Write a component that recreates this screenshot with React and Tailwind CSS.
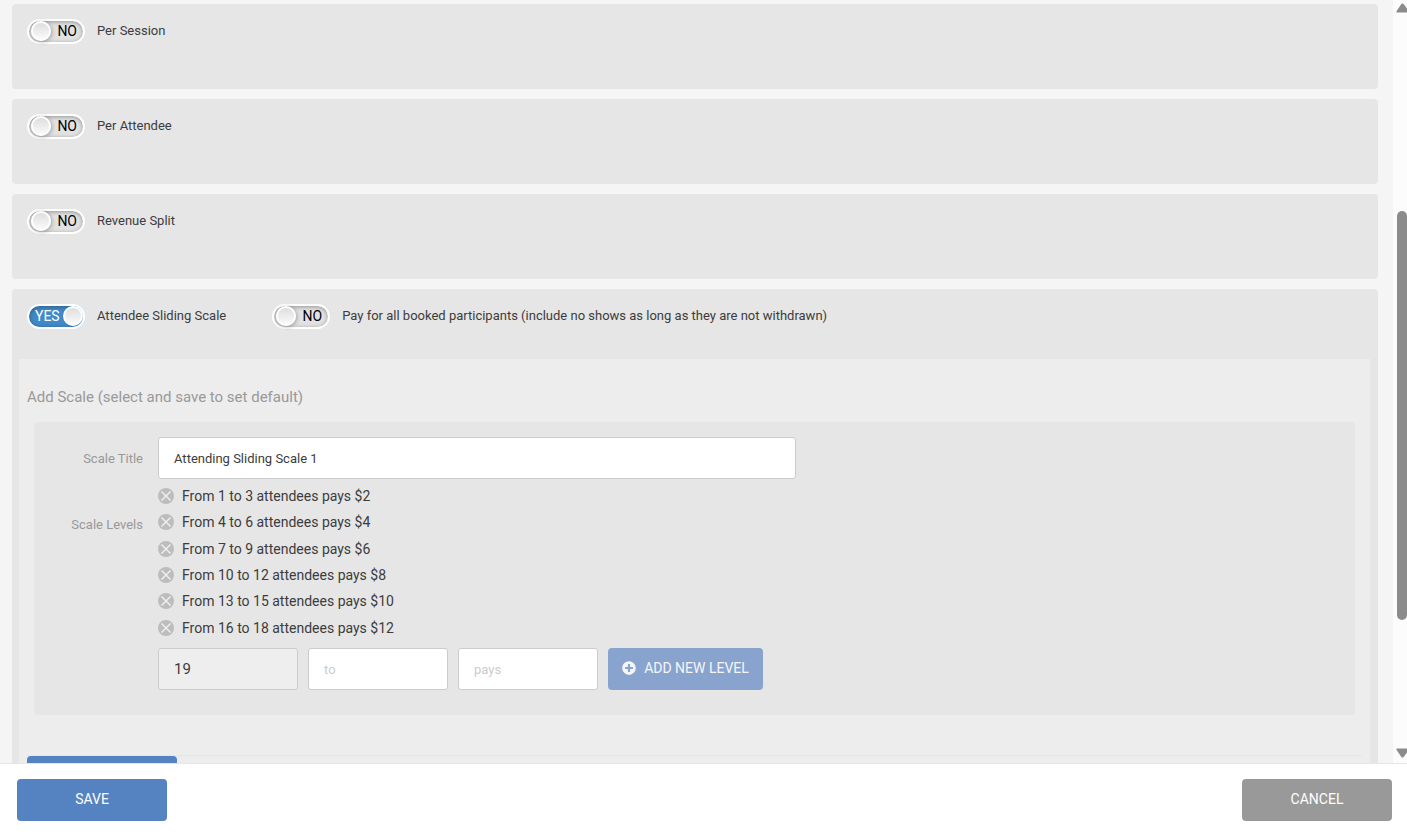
import { useState } from 'react'
import { FaPlusCircle } from 'react-icons/fa'

const payOptions = ['Per Session', 'Per Attendee', 'Revenue Split']

const initialLevels = [
  { from: 1, to: 3, pays: 2 },
  { from: 4, to: 6, pays: 4 },
  { from: 7, to: 9, pays: 6 },
  { from: 10, to: 12, pays: 8 },
  { from: 13, to: 15, pays: 10 },
  { from: 16, to: 18, pays: 12 }
]

function Toggle({ label, defaultOn = false }) {
  const [on, setOn] = useState(defaultOn)

  return (
    <label className="flex items-start gap-3 cursor-pointer">
      <span
        className={`relative flex shrink-0 items-start w-[58px] h-[25px] rounded-full border-2 border-white shadow-[inset_0_1px_4px_rgba(0,0,0,0.35)] ${
          on ? 'bg-[#4189c7]' : 'bg-[#e2e2e2]'
        }`}
      >
        <input
          type="checkbox"
          checked={on}
          onChange={(e) => setOn(e.target.checked)}
          className="absolute inset-0 opacity-0 cursor-pointer"
        />
        <span className={`w-full px-[6px] text-sm leading-5 ${on ? 'text-left text-white' : 'text-right text-black'}`}>
          {on ? 'YES' : 'NO'}
        </span>
        <span
          className={`absolute top-0 w-5 h-5 rounded-full border-2 border-white bg-linear-to-b from-[#dedede] to-[#fafafa] ${
            on ? 'right-0' : 'left-[2px] shadow-[1px_1px_4px_rgba(0,0,0,0.3)]'
          }`}
        />
      </span>
      <span className="text-[13px] leading-[23px]">{label}</span>
    </label>
  )
}

function RemoveIcon() {
  return (
    <svg viewBox="0 0 16 16" className="w-4 h-4">
      <circle cx="8" cy="8" r="8" fill="#bdbdbd" />
      <path d="M3.5 3.5l9 9M12.5 3.5l-9 9" stroke="#f2f2f2" strokeWidth="1.3" />
    </svg>
  )
}

function Scrollbar() {
  return (
    <div aria-hidden="true" className="flex flex-col items-end shrink-0 w-[14px] bg-[#fcfcfc] pt-[3px] pb-[5px]">
      <svg viewBox="0 0 11 10" className="w-[11px] h-[10px]">
        <path d="M6.5 0.5Q7.3 0.5 8 1.6L11 5.5V9.5H0.8Q0 9.5 0.5 8.3L5 1.6Q5.7 0.5 6.5 0.5Z" fill="#8b8b8b" />
      </svg>
      <div className="flex-[198]" />
      <div className="flex-[409] w-[10px] rounded-full bg-[#8b8b8b]" />
      <div className="flex-[128]" />
      <svg viewBox="0 0 11 10" className="w-[11px] h-[10px]">
        <path d="M6.5 9.5Q7.3 9.5 8 8.4L11 4.5V0.5H0.8Q0 0.5 0.5 1.7L5 8.4Q5.7 9.5 6.5 9.5Z" fill="#8b8b8b" />
      </svg>
    </div>
  )
}

export default function App() {
  const [title, setTitle] = useState('Attending Sliding Scale 1')
  const [levels, setLevels] = useState(initialLevels)
  const [to, setTo] = useState('')
  const [pays, setPays] = useState('')

  const nextFrom = levels.length ? levels[levels.length - 1].to + 1 : 1

  const addLevel = () => {
    if (!Number(to) || !Number(pays)) return
    setLevels([...levels, { from: nextFrom, to: Number(to), pays: Number(pays) }])
    setTo('')
    setPays('')
  }

  const removeLevel = (from) => {
    setLevels(levels.filter((level) => level.from !== from))
  }

  return (
    <div className="flex flex-col h-screen bg-[#f5f5f5] font-['Roboto',sans-serif] text-[#3c3c3c]">
      <div className="flex flex-1 min-h-0">
        <main className="flex-1 min-w-0 overflow-hidden pt-1 pl-3 pr-[15px]">
          <div className="space-y-[10px]">
            {payOptions.map((option) => (
              <section key={option} className="h-[85px] p-[15px] rounded bg-[#e6e6e6]">
                <div className="flex">
                  <Toggle label={option} />
                </div>
              </section>
            ))}

            {/* Sliding scale */}
            <section className="rounded bg-[#e6e6e6] pl-[7px] pr-2 pb-2">
              <div className="flex gap-[46px] h-[70px] pt-[15px] pl-2">
                <Toggle label="Attendee Sliding Scale" defaultOn />
                <Toggle label="Pay for all booked participants (include no shows as long as they are not withdrawn)" />
              </div>

              <div className="bg-[#ededed] pt-7 pb-8">
                <h2 className="pl-2 leading-5 text-[15px] text-[#999]">Add Scale (select and save to set default)</h2>

                <div className="mt-[15px] mx-[15px] pt-[15px] pb-[25px] rounded bg-[#e6e6e6]">
                  <div className="flex gap-[15px]">
                    <label
                      htmlFor="scale-title"
                      className="w-[109px] shrink-0 pt-3 text-right text-[13px] leading-5 text-[#999]"
                    >
                      Scale Title
                    </label>
                    <input
                      id="scale-title"
                      type="text"
                      value={title}
                      onChange={(e) => setTitle(e.target.value)}
                      className="w-full max-w-[638px] h-[42px] px-[15px] text-[13px] rounded-[3px] border border-[#ccc] bg-white"
                    />
                  </div>

                  <div className="flex gap-[15px] pt-1">
                    <div className="w-[109px] shrink-0 pt-8 text-right text-[13px] leading-5 text-[#999]">Scale Levels</div>
                    <div>
                      <ul className="grid min-h-[158px]">
                        {levels.map((level) => (
                          <li key={level.from} className="flex items-center gap-2 text-sm">
                            <button
                              type="button"
                              aria-label="Remove level"
                              onClick={() => removeLevel(level.from)}
                              className="cursor-pointer"
                            >
                              <RemoveIcon />
                            </button>
                            From {level.from} to {level.to} attendees pays ${level.pays}
                          </li>
                        ))}
                      </ul>

                      <div className="flex gap-[10px] mt-[7px]">
                        <input
                          type="text"
                          aria-label="From"
                          value={nextFrom}
                          readOnly
                          className="w-[140px] h-[42px] px-[15px] text-[15px] rounded-[3px] border border-[#ccc] bg-[#eee]"
                        />
                        <input
                          type="text"
                          aria-label="To"
                          placeholder="to"
                          value={to}
                          onChange={(e) => setTo(e.target.value)}
                          className="w-[140px] h-[42px] px-[15px] text-[13px] rounded-[3px] border border-[#ccc] bg-white placeholder:text-[#ccc]"
                        />
                        <input
                          type="text"
                          aria-label="Pays"
                          placeholder="pays"
                          value={pays}
                          onChange={(e) => setPays(e.target.value)}
                          className="w-[140px] h-[42px] px-[15px] text-[13px] rounded-[3px] border border-[#ccc] bg-white placeholder:text-[#ccc]"
                        />
                        <button
                          type="button"
                          onClick={addLevel}
                          className="flex items-center justify-center gap-2 w-[155px] h-[42px] pb-[2px] rounded bg-[#88a4ce] text-sm text-[#f5f5f5] cursor-pointer"
                        >
                          <FaPlusCircle className="w-[14px] h-[14px]" />
                          ADD NEW LEVEL
                        </button>
                      </div>
                    </div>
                  </div>
                </div>

                <div className="mt-10 mx-2 border-t border-[#e6e6e6]">
                  <button
                    type="button"
                    aria-label="Add scale"
                    className="block w-[150px] h-[42px] rounded bg-[#5583c1] cursor-pointer"
                  />
                </div>
              </div>
            </section>
          </div>
        </main>
        <Scrollbar />
      </div>

      {/* Footer */}
      <footer className="flex justify-between shrink-0 h-[72px] pt-[15px] pl-[17px] pr-[15px] border-t border-[#e6e6e6] bg-white text-sm text-white">
        <button type="button" className="w-[150px] h-[42px] pb-[2px] rounded bg-[#5583c1] cursor-pointer">
          SAVE
        </button>
        <button type="button" className="w-[150px] h-[42px] pb-[2px] rounded bg-[#999] cursor-pointer">
          CANCEL
        </button>
      </footer>
    </div>
  )
}
